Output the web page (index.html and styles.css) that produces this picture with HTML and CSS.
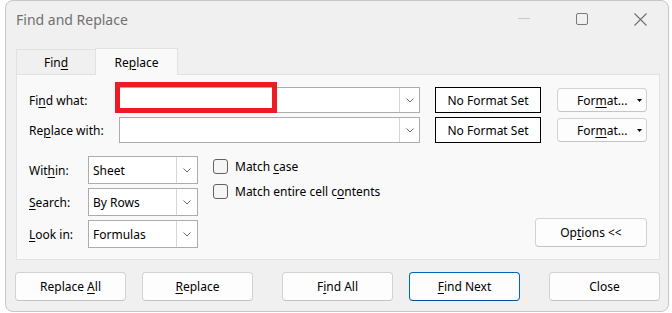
FILE: index.html
```html
<!DOCTYPE html>
<html lang="en">
<head>
<meta charset="utf-8">
<title>Find and Replace</title>
<link rel="stylesheet" href="styles.css">
</head>
<body>
<div class="window">
  <div class="titlebar">
    <span class="title">Find and Replace</span>
    <div class="controls">
      <svg class="ctl" width="12" height="12" viewBox="0 0 12 12"><line x1="0" y1="5.5" x2="12" y2="5.5" stroke="#c9c9c9" stroke-width="1"/></svg>
      <svg class="ctl" width="12" height="12" viewBox="0 0 12 12"><rect x="0.5" y="0.5" width="11" height="11" rx="1.5" fill="none" stroke="#7a7a7a" stroke-width="1"/></svg>
      <svg class="ctl" width="13" height="13" viewBox="0 0 13 13"><path d="M0.5 0.5 L12.5 12.5 M12.5 0.5 L0.5 12.5" stroke="#6f6f6f" stroke-width="1.1" fill="none"/></svg>
    </div>
  </div>
  <div class="main">
    <div class="tabs">
      <div class="tab tab-find"><span>Fin<u>d</u></span></div>
      <div class="tab tab-replace"><span>Re<u>p</u>lace</span></div>
    </div>
    <div class="panel">
      <div class="row">
        <span class="label label-wide">Fi<u>n</u>d what:</span>
        <div class="combo">
          <span class="drop"><svg width="8" height="5" viewBox="0 0 8 5"><polyline points="0.5,0.5 4,4 7.5,0.5" fill="none" stroke="#6b6b6b" stroke-width="1"/></svg></span>
          <div class="highlight"></div>
        </div>
        <div class="nfs"><span>No Format Set</span></div>
        <button class="btn fmt"><span>For<u>m</u>at...</span><svg class="tri" width="5" height="3" viewBox="0 0 5 3"><polygon points="0,0 5,0 2.5,3" fill="#000"/></svg></button>
      </div>
      <div class="row">
        <span class="label label-wide">Re<u>p</u>lace with:</span>
        <div class="combo">
          <span class="drop"><svg width="8" height="5" viewBox="0 0 8 5"><polyline points="0.5,0.5 4,4 7.5,0.5" fill="none" stroke="#6b6b6b" stroke-width="1"/></svg></span>
        </div>
        <div class="nfs"><span>No Format Set</span></div>
        <button class="btn fmt"><span>For<u>m</u>at...</span><svg class="tri" width="5" height="3" viewBox="0 0 5 3"><polygon points="0,0 5,0 2.5,3" fill="#000"/></svg></button>
      </div>
      <div class="lower">
        <div class="selects">
          <span class="label">Wit<u>h</u>in:</span>
          <div class="select"><span class="sel-text">Sheet</span><span class="drop"><svg width="8" height="5" viewBox="0 0 8 5"><polyline points="0.5,0.5 4,4 7.5,0.5" fill="none" stroke="#6b6b6b" stroke-width="1"/></svg></span></div>
          <span class="label"><u>S</u>earch:</span>
          <div class="select"><span class="sel-text">By Rows</span><span class="drop"><svg width="8" height="5" viewBox="0 0 8 5"><polyline points="0.5,0.5 4,4 7.5,0.5" fill="none" stroke="#6b6b6b" stroke-width="1"/></svg></span></div>
          <span class="label"><u>L</u>ook in:</span>
          <div class="select"><span class="sel-text">Formulas</span><span class="drop"><svg width="8" height="5" viewBox="0 0 8 5"><polyline points="0.5,0.5 4,4 7.5,0.5" fill="none" stroke="#6b6b6b" stroke-width="1"/></svg></span></div>
        </div>
        <div class="checks">
          <div class="check"><span class="box"></span><span>Match <u>c</u>ase</span></div>
          <div class="check"><span class="box"></span><span>Match entire cell c<u>o</u>ntents</span></div>
        </div>
        <button class="btn options"><span>Op<u>t</u>ions &lt;&lt;</span></button>
      </div>
    </div>
    <div class="actions">
      <button class="btn act act-first"><span>Replace <u>A</u>ll</span></button>
      <button class="btn act act-near"><span><u>R</u>eplace</span></button>
      <button class="btn act act-far"><span>F<u>i</u>nd All</span></button>
      <button class="btn act act-near act-default"><span><u>F</u>ind Next</span></button>
      <button class="btn act act-far"><span>Close</span></button>
    </div>
  </div>
</div>
</body>
</html>
```

FILE: styles.css
```css
body {
  margin: 0;
  background: #ffffff;
  font-family: "Noto Sans", "Open Sans", sans-serif;
  font-size: 12px;
  color: #000;
}

u {
  text-decoration-thickness: 1px;
  text-underline-offset: 2px;
}

.window {
  margin-left: 5px;
  width: 664px;
  height: 312px;
  box-sizing: border-box;
  border: 1px solid #c6c6c6;
  border-radius: 8px;
  background: #f0f0f0;
  overflow: hidden;
}

.titlebar {
  height: 47px;
  display: flex;
  justify-content: space-between;
  align-items: flex-start;
  padding: 0 21px 0 10px;
}

.title {
  font-size: 14px;
  line-height: 20px;
  margin-top: 9px;
  color: #707070;
}

.controls {
  display: flex;
  gap: 46px;
  margin-top: 12px;
}

.ctl {
  display: block;
}

.main {
  padding: 0 8px 0 10px;
}

.tabs {
  display: flex;
  align-items: flex-end;
  height: 27px;
  margin-bottom: -1px;
  position: relative;
  z-index: 1;
}

.tab {
  box-sizing: border-box;
  border: 1px solid #e2e2e2;
  display: flex;
  align-items: center;
  justify-content: center;
}

.tab-find {
  width: 79px;
  height: 26px;
  background: #f0f0f0;
  border-right: none;
}

.tab-replace {
  width: 83px;
  height: 27px;
  background: #f9f9f9;
  border-bottom: none;
  padding-top: 1px;
}

.panel {
  border: 1px solid #e2e2e2;
  background: #f9f9f9;
  padding: 12px 12px 11px;
}

.row {
  display: flex;
  align-items: center;
  height: 26px;
}

.row + .row {
  margin-top: 4px;
}

.label {
  white-space: nowrap;
}

.label-wide {
  width: 90px;
  flex: none;
}

.combo {
  position: relative;
  display: flex;
  justify-content: flex-end;
  width: 301px;
  height: 26px;
  box-sizing: border-box;
  border: 1px solid #acacac;
  background: #fff;
  flex: none;
}

.drop {
  width: 20px;
  box-sizing: border-box;
  border-left: 1px solid #d6d6d6;
  display: flex;
  align-items: center;
  justify-content: center;
  background: #fff;
}

.drop svg {
  display: block;
}

.highlight {
  position: absolute;
  left: -5px;
  top: -6px;
  width: 162px;
  height: 31px;
  box-sizing: border-box;
  border: 5px solid #ed1c24;
}

.nfs {
  margin-left: 15px;
  width: 106px;
  height: 26px;
  box-sizing: border-box;
  border: 1px solid #000;
  background: #fff;
  display: flex;
  align-items: center;
  justify-content: center;
  flex: none;
}

.btn {
  font: inherit;
  color: inherit;
  padding: 0;
  margin: 0;
  box-sizing: border-box;
  border: 1px solid #d2d2d2;
  border-bottom-color: #c4c4c4;
  border-radius: 4px;
  background: #fdfdfd;
  display: flex;
  align-items: center;
  justify-content: center;
}

.fmt {
  margin-left: 16px;
  width: 90px;
  height: 24px;
  justify-content: flex-start;
  padding-left: 19px;
  flex: none;
}

.tri {
  display: block;
  margin-left: auto;
  margin-right: 4px;
}

.lower {
  display: flex;
  margin-top: 13px;
}

.selects {
  display: grid;
  grid-template-columns: 59px 110px;
  grid-auto-rows: 28px;
  row-gap: 4px;
  align-items: center;
}

.select {
  display: flex;
  height: 28px;
  box-sizing: border-box;
  border: 1px solid #acacac;
  background: #fff;
}

.sel-text {
  flex: 1;
  padding-left: 4px;
  display: flex;
  align-items: center;
}

.select .drop {
  width: 21px;
}

.checks {
  margin-left: 15px;
  margin-top: 3px;
  display: flex;
  flex-direction: column;
  gap: 10px;
}

.check {
  display: flex;
  align-items: center;
  height: 15px;
  gap: 7px;
}

.box {
  width: 15px;
  height: 15px;
  box-sizing: border-box;
  border: 1px solid #626262;
  border-radius: 3px;
  background: #f5f5f5;
}

.options {
  margin-left: auto;
  align-self: flex-end;
  margin-bottom: 1px;
  width: 112px;
  height: 29px;
}

.actions {
  display: flex;
  margin-top: 12px;
  margin-left: -1px;
}

.act {
  width: 111px;
  height: 29px;
}

.act-near {
  margin-left: 16px;
}

.act-far {
  margin-left: 29px;
}

.act-default {
  border-color: #0067c0;
  border-bottom-color: #00529b;
}
```
